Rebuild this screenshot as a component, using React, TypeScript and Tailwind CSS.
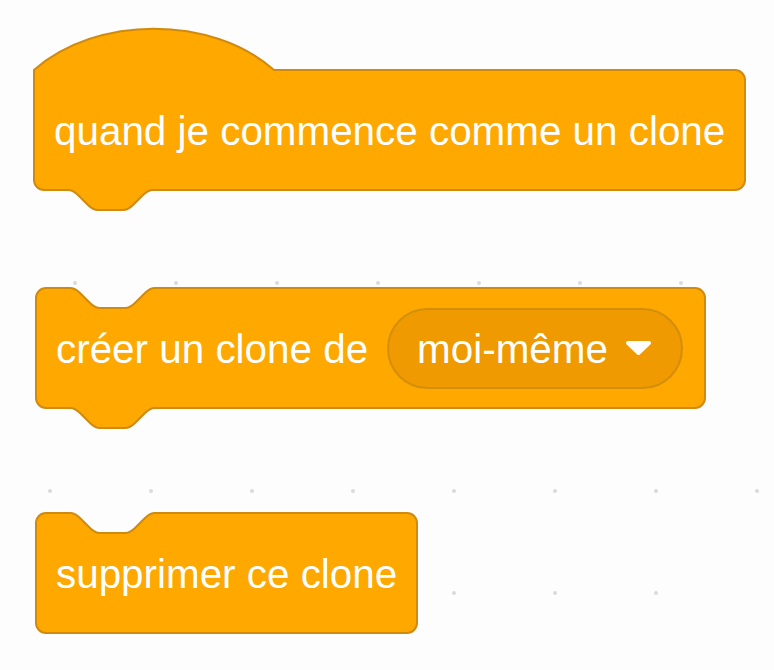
import type { ReactNode } from "react";

const FILL = "#FFA800";
const STROKE = "#CF8A10";

// notch: starts 34px from the left edge, 85px wide, 20px deep
const NOTCH_X = 34;
const NOTCH_TOP =
  "c 5,0 7.5,2.5 10,5 l 10,10 c 2.5,2.5 5,5 10,5 h 25 c 5,0 7.5,-2.5 10,-5 l 10,-10 c 2.5,-2.5 5,-5 10,-5";
const NOTCH_BOTTOM =
  "c -5,0 -7.5,2.5 -10,5 l -10,10 c -2.5,2.5 -5,5 -10,5 h -25 c -5,0 -7.5,-2.5 -10,-5 l -10,-10 c -2.5,-2.5 -5,-5 -10,-5";

type Shape = "hat" | "stack" | "cap";

function blockPath(w: number, h: number, shape: Shape) {
  const top =
    shape === "hat"
      ? `M 0,0 c 62.5,-55 177.5,-55 240,0 H ${w - 10}`
      : `M 0,10 a 10 10 0 0 1 10 -10 H ${NOTCH_X} ${NOTCH_TOP} H ${w - 10}`;
  const bottom = shape === "cap" ? "" : `H ${NOTCH_X + 85} ${NOTCH_BOTTOM}`;
  return [
    top,
    `a 10 10 0 0 1 10 10`,
    `V ${h - 10}`,
    `a 10 10 0 0 1 -10 10`,
    bottom,
    `H 10`,
    `a 10 10 0 0 1 -10 -10`,
    "Z",
  ].join(" ");
}

interface BlockProps {
  width: number;
  shape?: Shape;
  className?: string;
  children: ReactNode;
}

function Block({ width, shape = "stack", className, children }: BlockProps) {
  const height = 120;
  return (
    <div className={`relative h-[120px] ${className ?? ""}`} style={{ width }}>
      <svg
        className="absolute left-0 top-0 overflow-visible"
        width={width}
        height={height}
      >
        <path
          d={blockPath(width, height, shape)}
          fill={FILL}
          stroke={STROKE}
          strokeWidth={2}
        />
      </svg>
      <div className="relative flex h-full items-center pl-[20px] pt-[3px] text-[40.4px] leading-none text-white">
        {children}
      </div>
    </div>
  );
}

function Dropdown({ label }: { label: string }) {
  return (
    <span className="ml-[19px] mt-[-3px] flex h-[81px] items-center rounded-full border-2 border-[#D48E0C] bg-[#EE9A00] pl-[28px] pr-[29px] pt-[3px]">
      <span>{label}</span>
      <svg width="27" height="16" viewBox="0 0 27 16" className="ml-[17px] mt-[-3px]">
        <path
          d="M 3,3 H 24 L 13.5,13 Z"
          fill="white"
          stroke="white"
          strokeWidth={4}
          strokeLinejoin="round"
        />
      </svg>
    </span>
  );
}

const dotRows = [
  { y: 283, xs: [75, 176, 277, 378, 479, 580, 681] },
  { y: 491, xs: [50, 151, 252, 353, 454, 555, 656, 757] },
  { y: 593, xs: [50, 151, 252, 353, 454, 555, 656] },
];

export default function App() {
  return (
    <div className="relative h-[670px] w-[774px] overflow-hidden bg-[#FDFDFD] font-['Liberation_Sans',Arial,sans-serif]">
      <svg className="absolute inset-0" width="774" height="670">
        {dotRows.map((row) =>
          row.xs.map((x) => (
            <circle key={`${row.y}-${x}`} cx={x} cy={row.y} r={2} fill="#DADADA" />
          )),
        )}
      </svg>

      <div className="relative flex flex-col pl-[34px] pt-[70px]">
        <Block width={711} shape="hat">
          quand je commence comme un clone
        </Block>

        <Block width={669} className="ml-[2px] mt-[98px]">
          créer un clone de
          <Dropdown label="moi-même" />
        </Block>

        <Block width={381} shape="cap" className="ml-[2px] mt-[105px]">
          supprimer ce clone
        </Block>
      </div>
    </div>
  );
}
